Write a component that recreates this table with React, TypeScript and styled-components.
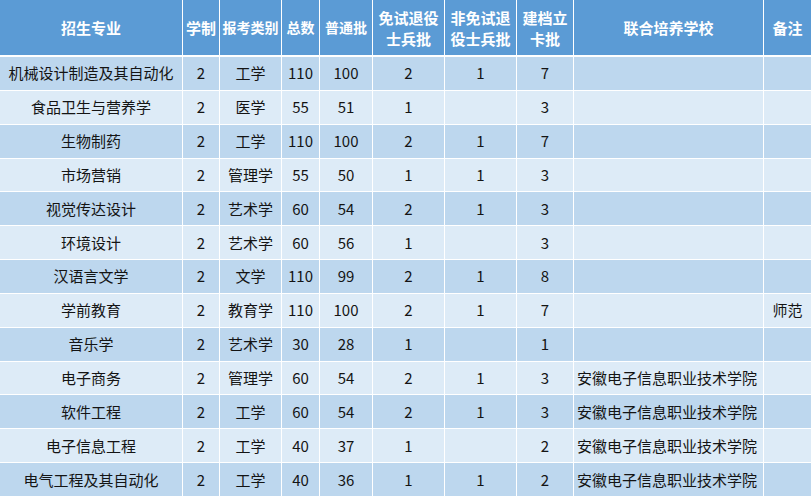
import React from 'react';
import styled, { createGlobalStyle } from 'styled-components';

const GlobalStyle = createGlobalStyle`
  html, body {
    margin: 0;
    padding: 0;
    background: #ffffff;
  }
  body {
    font-family: 'Noto Sans CJK SC', 'Noto Sans', sans-serif;
  }
`;

type Row = {
  major: string;
  years: string;
  category: string;
  total: string;
  normal: string;
  exempt: string;
  nonExempt: string;
  archive: string;
  partner: string;
  note: string;
};

const PARTNER = '安徽电子信息职业技术学院';

const rows: Row[] = [
  { major: '机械设计制造及其自动化', years: '2', category: '工学', total: '110', normal: '100', exempt: '2', nonExempt: '1', archive: '7', partner: '', note: '' },
  { major: '食品卫生与营养学', years: '2', category: '医学', total: '55', normal: '51', exempt: '1', nonExempt: '', archive: '3', partner: '', note: '' },
  { major: '生物制药', years: '2', category: '工学', total: '110', normal: '100', exempt: '2', nonExempt: '1', archive: '7', partner: '', note: '' },
  { major: '市场营销', years: '2', category: '管理学', total: '55', normal: '50', exempt: '1', nonExempt: '1', archive: '3', partner: '', note: '' },
  { major: '视觉传达设计', years: '2', category: '艺术学', total: '60', normal: '54', exempt: '2', nonExempt: '1', archive: '3', partner: '', note: '' },
  { major: '环境设计', years: '2', category: '艺术学', total: '60', normal: '56', exempt: '1', nonExempt: '', archive: '3', partner: '', note: '' },
  { major: '汉语言文学', years: '2', category: '文学', total: '110', normal: '99', exempt: '2', nonExempt: '1', archive: '8', partner: '', note: '' },
  { major: '学前教育', years: '2', category: '教育学', total: '110', normal: '100', exempt: '2', nonExempt: '1', archive: '7', partner: '', note: '师范' },
  { major: '音乐学', years: '2', category: '艺术学', total: '30', normal: '28', exempt: '1', nonExempt: '', archive: '1', partner: '', note: '' },
  { major: '电子商务', years: '2', category: '管理学', total: '60', normal: '54', exempt: '2', nonExempt: '1', archive: '3', partner: PARTNER, note: '' },
  { major: '软件工程', years: '2', category: '工学', total: '60', normal: '54', exempt: '2', nonExempt: '1', archive: '3', partner: PARTNER, note: '' },
  { major: '电子信息工程', years: '2', category: '工学', total: '40', normal: '37', exempt: '1', nonExempt: '', archive: '2', partner: PARTNER, note: '' },
  { major: '电气工程及其自动化', years: '2', category: '工学', total: '40', normal: '36', exempt: '1', nonExempt: '1', archive: '2', partner: PARTNER, note: '' },
];

// column widths include the 1px white right border
const widths = [183, 37, 62, 38, 53, 72, 72, 57, 190, 47];

const App: React.FC = () => {
  return (
    <>
      <GlobalStyle />
      <Table>
        <colgroup>
          {widths.map((w, i) => (
            <col key={i} style={{ width: w }} />
          ))}
        </colgroup>
        <thead>
          <tr>
            <HeadCell>招生专业</HeadCell>
            <HeadCell>学制</HeadCell>
            <HeadCell $size={14}>报考类别</HeadCell>
            <HeadCell $size={14}>总数</HeadCell>
            <HeadCell $size={14}>普通批</HeadCell>
            <HeadCell>免试退役<br />士兵批</HeadCell>
            <HeadCell>非免试退<br />役士兵批</HeadCell>
            <HeadCell>建档立<br />卡批</HeadCell>
            <HeadCell>联合培养学校</HeadCell>
            <HeadCell>备注</HeadCell>
          </tr>
        </thead>
        <tbody>
          {rows.map((r, i) => (
            <BodyRow key={r.major} $odd={i % 2 === 0}>
              <Cell>{r.major}</Cell>
              <Cell>{r.years}</Cell>
              <Cell>{r.category}</Cell>
              <Cell>{r.total}</Cell>
              <Cell>{r.normal}</Cell>
              <Cell>{r.exempt}</Cell>
              <Cell>{r.nonExempt}</Cell>
              <Cell>{r.archive}</Cell>
              <Cell $left>{r.partner}</Cell>
              <Cell>{r.note}</Cell>
            </BodyRow>
          ))}
        </tbody>
      </Table>
    </>
  );
};

export default App;

const Table = styled.table`
  width: 811px;
  table-layout: fixed;
  border-collapse: separate;
  border-spacing: 0;
  font-family: 'Noto Sans CJK SC', 'Noto Sans', sans-serif;
`;

const HeadCell = styled.th<{ $size?: number }>`
  height: 55px;
  padding: 0 2px;
  background: #5b9bd5;
  color: #ffffff;
  font-weight: 700;
  font-size: ${(p) => p.$size ?? 15}px;
  line-height: 21px;
  text-align: center;
  white-space: nowrap;
  border-right: 1px solid #ffffff;
  border-bottom: 2px solid #ffffff;
  box-sizing: content-box;

  &:last-child {
    border-right: none;
  }
`;

const BodyRow = styled.tr<{ $odd: boolean }>`
  background: ${(p) => (p.$odd ? '#bdd7ee' : '#ddebf7')};
`;

const Cell = styled.td<{ $left?: boolean }>`
  height: 32.85px;
  padding: ${(p) => (p.$left ? '0 0 0 3px' : '0')};
  color: #141414;
  font-size: 15px;
  line-height: 20px;
  text-align: ${(p) => (p.$left ? 'left' : 'center')};
  white-space: nowrap;
  overflow: hidden;
  border-right: 1px solid #ffffff;
  border-bottom: 1px solid #ffffff;
  box-sizing: content-box;

  &:last-child {
    border-right: none;
  }
`;
